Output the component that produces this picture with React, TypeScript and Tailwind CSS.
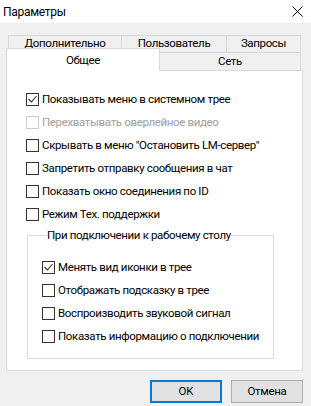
import React from "react";

const font = { fontFamily: 'Roboto, "Noto Sans", "Liberation Sans", sans-serif' };

function Box({ checked, disabled }: { checked?: boolean; disabled?: boolean }) {
  return (
    <span
      className={
        "w-[13px] h-[13px] shrink-0 border bg-white flex items-center justify-center " +
        (disabled ? "border-[#cccccc]" : "border-[#333333]")
      }
    >
      {checked && (
        <svg width="11" height="11" viewBox="0 0 11 11">
          <polyline points="1.5,5 4.5,8 9.5,2" fill="none" stroke="#333" strokeWidth="1.1" />
        </svg>
      )}
    </span>
  );
}

function Row({ label, checked, disabled }: { label: string; checked?: boolean; disabled?: boolean }) {
  return (
    <div className="h-[23px] flex items-center gap-[3px]">
      <Box checked={checked} disabled={disabled} />
      <span
        className={
          "text-[11.5px] tracking-[-0.35px] leading-none whitespace-nowrap " +
          (disabled ? "text-[#a0a0a0]" : "text-black")
        }
      >
        {label}
      </span>
    </div>
  );
}

export default function App() {
  return (
    <div className="w-[311px] h-[406px] bg-[#f0f0f0] flex flex-col text-black overflow-hidden" style={font}>
      {/* title bar */}
      <div className="h-[23px] bg-white flex items-center justify-between pl-[3px] pr-[8px]">
        <span className="text-[12px] tracking-[-0.3px]">Параметры</span>
        <svg width="11" height="11" viewBox="0 0 11 11">
          <path d="M0.5 0.5 L10.5 10.5 M10.5 0.5 L0.5 10.5" stroke="#000" strokeWidth="1" />
        </svg>
      </div>

      {/* tabs row 1 */}
      <div className="mt-[12px] ml-[8px] flex h-[17px] text-[11.5px] tracking-[-0.35px]">
        <div className="w-[114px] border border-b-0 border-[#d9d9d9] flex items-center justify-center">Дополнительно</div>
        <div className="w-[106px] -ml-px border border-b-0 border-[#d9d9d9] flex items-center justify-center">Пользователь</div>
        <div className="w-[75px] -ml-px border border-b-0 border-[#d9d9d9] flex items-center justify-center">Запросы</div>
      </div>

      {/* tabs row 2 */}
      <div className="ml-[6px] flex items-end h-[18px] text-[11.5px] tracking-[-0.35px]">
        <div className="relative top-px z-10 w-[154px] h-[23px] shrink-0 bg-white border border-b-0 border-[#d9d9d9] flex items-center justify-center pt-[1px]">
          Общее
        </div>
        <div className="w-[142px] h-[18px] -ml-px border border-b-0 border-[#d9d9d9] flex items-center justify-center pt-[1px]">
          Сеть
        </div>
      </div>

      {/* panel */}
      <div className="ml-[6px] w-[297px] h-[301px] bg-white border border-[#d9d9d9] pl-[19px] pt-[17px]">
        <Row label="Показывать меню в системном трее" checked />
        <Row label="Перехватывать оверлейное видео" disabled />
        <Row label={'Скрывать в меню "Остановить LM-сервер"'} />
        <Row label="Запретить отправку сообщения в чат" />
        <Row label="Показать окно соединения по ID" />
        <Row label="Режим Тех. поддержки" />

        <fieldset className="mt-[2px] ml-px w-[247px] min-w-0 border border-[#dcdcdc] pl-[14px] pt-[14px] pb-[10px]">
          <legend className="ml-[5px] text-[11.5px] tracking-[-0.35px] leading-[14px] px-0">
            При подключении к рабочему столу
          </legend>
          <Row label="Менять вид иконки в трее" checked />
          <Row label="Отображать подсказку в трее" />
          <Row label="Воспроизводить звуковой сигнал" />
          <Row label="Показать информацию о подключении" />
        </fieldset>
      </div>

      {/* buttons */}
      <div className="mt-[9px] flex justify-end gap-[9px] pr-[8px]">
        <button className="w-[72px] h-[23px] bg-[#e1e1e1] border-2 border-[#0078d7] text-[11.5px] flex items-center justify-center">
          OK
        </button>
        <button className="w-[72px] h-[23px] bg-[#e1e1e1] border border-[#adadad] text-[11.5px] tracking-[-0.3px] flex items-center justify-center">
          Отмена
        </button>
      </div>
    </div>
  );
}
